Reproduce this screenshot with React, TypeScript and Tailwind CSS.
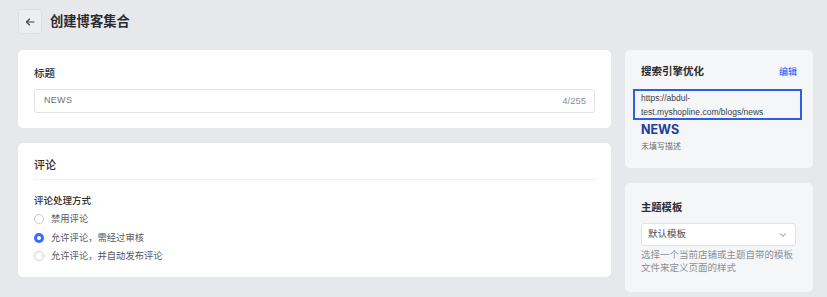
import { ChevronDown } from "lucide-react";

const font = { fontFamily: '"Inter", "Noto Sans CJK SC", sans-serif' };
const arial = { fontFamily: '"Liberation Sans", "Noto Sans CJK SC", sans-serif' };

function Radio({ label, checked }: { label: string; checked?: boolean }) {
  return (
    <label className="flex items-center gap-[7px] h-[18.5px] text-[9.3px] text-[#55585e]">
      {checked ? (
        <span className="w-[10px] h-[10px] rounded-full bg-[#356dff] flex items-center justify-center">
          <span className="w-[4px] h-[4px] rounded-full bg-white" />
        </span>
      ) : (
        <span className="w-[10px] h-[10px] rounded-full border border-[#c9ccd1] bg-white" />
      )}
      {label}
    </label>
  );
}

export default function App() {
  return (
    <div className="w-[827px] h-[297px] bg-[#e6e8ec] overflow-hidden" style={font}>
      <div className="flex items-center h-[42px] pl-[18px] pt-[1px]">
        <button className="w-[24px] h-[25px] rounded-[4px] border border-[#dcdfe4] bg-[#eceef1] flex items-center justify-center text-[#3a3d42]">
          <svg width="12" height="12" viewBox="0 0 24 24" fill="none" stroke="currentColor" strokeWidth="2.2" strokeLinecap="round" strokeLinejoin="round">
            <path d="M20 12H5" />
            <path d="M11 6l-6 6 6 6" />
          </svg>
        </button>
        <h1 className="ml-[8px] text-[13.3px] font-semibold text-[#2a2c30]">创建博客集合</h1>
      </div>

      <div className="flex gap-[14px] pl-[18px] pt-[8px]">
        <div className="w-[593px] flex flex-col gap-[15px]">
          <div className="bg-white rounded-[5px] h-[78px] px-[16px] pt-[16px]">
            <div className="text-[10.5px] font-medium text-[#2a2c30] leading-[16px]">标题</div>
            <div className="mt-[7px] h-[24px] w-[561px] border border-[#dfe2e6] rounded-[3px] flex items-center justify-between pl-[9px] pr-[8px]" style={arial}>
              <span className="text-[9px] text-[#6b6f75] tracking-[0.3px]">NEWS</span>
              <span className="text-[9.5px] text-[#8c9096]">4/255</span>
            </div>
          </div>

          <div className="bg-white rounded-[5px] h-[134px] px-[16px] pt-[13px]">
            <div className="text-[11px] font-medium text-[#2a2c30] leading-[18px]">评论</div>
            <div className="mt-[5px] border-t border-[#eef0f2] w-[562px]" />
            <div className="mt-[14px] text-[9.5px] font-medium text-[#2a2c30] leading-[14px]">评论处理方式</div>
            <div className="mt-[2px] flex flex-col">
              <Radio label="禁用评论" />
              <Radio label="允许评论，需经过审核" checked />
              <Radio label="允许评论，并自动发布评论" />
            </div>
          </div>
        </div>

        <div className="w-[188px] flex flex-col gap-[15px]">
          <div className="bg-[#f5f6f8] rounded-[5px] h-[118px] px-[16px] pt-[14px]">
            <div className="flex items-center justify-between leading-[16px]">
              <span className="text-[10.5px] font-semibold text-[#2a2c30]">搜索引擎优化</span>
              <span className="text-[9px] font-medium text-[#356dff]">编辑</span>
            </div>
            <div className="mt-[9px] ml-[-8px] mr-[-5px] border-2 border-[#2c5fe8] h-[31px] pl-[6px] pt-[1px] text-[8.5px] leading-[13.5px] text-[#3d4046]" style={arial}>
              <div>https://abdul-</div>
              <div>test.myshopline.com/blogs/news</div>
            </div>
            <div className="mt-[1px] text-[12.5px] font-bold text-[#1f3c9e] leading-[18px]">NEWS</div>
            <div className="mt-[1px] text-[8px] text-[#6b6f75] leading-[13px]">未填写描述</div>
          </div>

          <div className="bg-[#f5f6f8] rounded-[5px] h-[109px] px-[16px] pt-[16px]">
            <div className="text-[10.3px] font-semibold text-[#2a2c30] leading-[16px]">主题模板</div>
            <div className="mt-[8px] h-[23px] w-[155px] bg-white border border-[#dfe2e6] rounded-[3px] flex items-center justify-between pl-[6px] pr-[7px]">
              <span className="text-[9.5px] text-[#4a4d52]">默认模板</span>
              <ChevronDown size={10} className="text-[#6b6f75]" strokeWidth={2} />
            </div>
            <div className="mt-[3px] text-[9.5px] leading-[12.5px] text-[#8c9096]">
              选择一个当前店铺或主题自带的模板文件来定义页面的样式
            </div>
          </div>
        </div>
      </div>
    </div>
  );
}
